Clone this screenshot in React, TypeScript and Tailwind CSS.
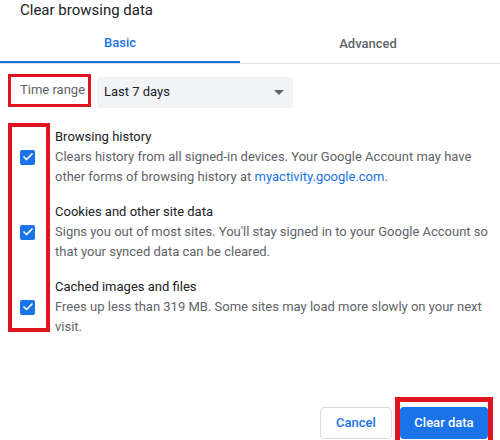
import { Check } from "lucide-react"

const items = [
  {
    title: "Browsing history",
    desc: (
      <>
        Clears history from all signed-in devices. Your Google Account may have other forms of browsing history at{" "}
        <span className="text-[#1a73e8]">myactivity.google.com</span>.
      </>
    ),
  },
  {
    title: "Cookies and other site data",
    desc: <>Signs you out of most sites. You'll stay signed in to your Google Account so that your synced data can be cleared.</>,
  },
  {
    title: "Cached images and files",
    desc: <>Frees up less than 319 MB. Some sites may load more slowly on your next visit.</>,
  },
]

export default function App() {
  return (
    <div className="w-[500px] h-[440px] bg-white overflow-hidden font-['Roboto',sans-serif] text-[13px] text-[#202124]">
      {/* title */}
      <div className="pl-5 h-5 leading-5 text-[15px] text-[#202124]">Clear browsing data</div>

      {/* tabs */}
      <div className="flex h-[44px] border-b border-[#e0e0e0]">
        <div className="w-[240px] flex items-center justify-center pt-[4px] border-b-2 border-[#1a73e8] font-medium text-[#1a73e8]">
          Basic
        </div>
        <div className="flex-1 flex items-center justify-center pt-[4px] font-medium text-[#5f6368] pr-[4px]">
          Advanced
        </div>
      </div>

      {/* time range */}
      <div className="flex items-center mt-[9px] h-[34px]">
        <div className="ml-2 w-[83px] h-[33px] border-[3px] border-[#e0131e] flex items-center pl-[9px] text-[#5f6368]">
          Time range
        </div>
        <div className="ml-[6px] mt-[4px] w-[196px] h-[31px] bg-[#f1f3f4] rounded flex items-center justify-between pl-[7px] pr-[9px]">
          <span>Last 7 days</span>
          <span className="w-0 h-0 border-l-[5px] border-r-[5px] border-t-[5px] border-l-transparent border-r-transparent border-t-[#5f6368]" />
        </div>
      </div>

      {/* checkboxes */}
      <div className="relative mt-[20px] flex flex-col gap-[15px]">
        <div className="absolute left-2 top-[-4px] w-[42px] h-[209px] border-4 border-[#e0131e]" />
        {items.map((it) => (
          <div key={it.title} className="flex items-center pl-5">
            <div className="w-[15px] h-[15px] rounded-[2px] bg-[#1a73e8] flex items-center justify-center shrink-0">
              <Check size={12} strokeWidth={3.5} className="text-white" />
            </div>
            <div className="ml-5 w-[440px] leading-5">
              <div className="text-[#202124]">{it.title}</div>
              <div className="text-[#5f6368]">{it.desc}</div>
            </div>
          </div>
        ))}
      </div>

      {/* footer */}
      <div className="flex justify-end items-start mt-[60px] pr-[7px]">
        <button className="mt-[10px] w-[72px] h-[32px] border border-[#dadce0] rounded text-[#1a73e8] font-medium">
          Cancel
        </button>
        <div className="ml-[3px] border-[5px] border-[#e0131e] pt-[5px] pb-[6px]">
          <button className="w-[88px] h-[32px] rounded bg-[#1a73e8] text-white font-medium">Clear data</button>
        </div>
      </div>
    </div>
  )
}
